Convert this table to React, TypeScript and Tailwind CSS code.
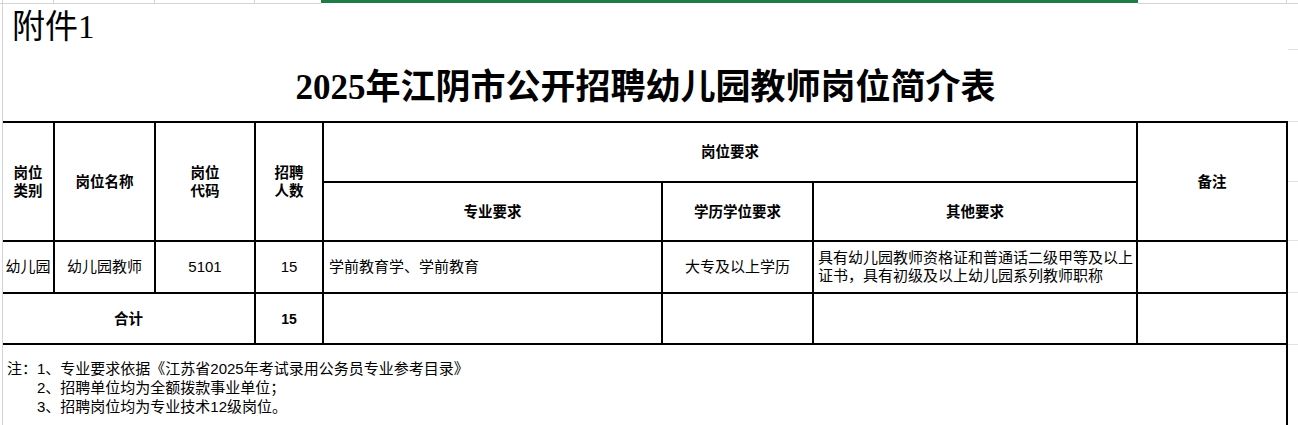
import type { ReactNode } from 'react'

const head = "flex items-center justify-center bg-white text-center text-[14.5px] font-bold leading-[18px]"
const body = "flex items-center bg-white text-[15px] leading-[18px]"

function Cell({ className, children }: { className: string; children?: ReactNode }) {
  return <div className={className}>{children}</div>
}

function TopStrip() {
  return (
    <div className="flex h-[4px]">
      <div className="w-[3px] border-r border-b border-[#d4d4d4]" />
      <div className="w-[51px] border-r border-b border-[#d4d4d4]" />
      <div className="w-[101px] border-r border-b border-[#d4d4d4]" />
      <div className="w-[100px] border-r border-b border-[#d4d4d4]" />
      <div className="w-[66px] border-b border-[#d4d4d4]" />
      <div className="h-[3px] w-[817px] bg-[#1e7d46]" />
      <div className="w-[149px] border-r border-b border-[#d4d4d4]" />
      <div className="flex-1 border-b border-[#d4d4d4]" />
    </div>
  )
}

function RightTicks() {
  return (
    <div className="flex w-[10px] flex-col">
      <div className="h-[46px] border-b border-[#e2e2e2]" />
      <div className="h-[72px] border-b border-[#e2e2e2]" />
      <div className="h-[60px] border-b border-[#e2e2e2]" />
      <div className="h-[59px] border-b border-[#e2e2e2]" />
      <div className="h-[52px] border-b border-[#e2e2e2]" />
      <div className="h-[52px] border-b border-[#e2e2e2]" />
    </div>
  )
}

export default function App() {
  return (
    <div className="h-[425px] w-[1298px] overflow-hidden bg-white text-black font-['Liberation_Sans','Noto_Sans_CJK_SC',sans-serif]">
      <TopStrip />
      <div className="flex">
        <div className="h-[421px] w-[3px] shrink-0 border-r border-[#d4d4d4]" />
        <div className="w-[1285px] shrink-0">
          <div className="flex h-[46px] items-center pl-[9px] text-[33px] leading-none font-['Liberation_Serif','Noto_Sans_CJK_SC',serif]">
            附件1
          </div>
          <div className="flex h-[71px] items-center justify-center pt-[3px] text-[35px] font-bold leading-none font-['Liberation_Serif','Noto_Sans_CJK_SC',serif]">
            2025年江阴市公开招聘幼儿园教师岗位简介表
          </div>

          <div className="grid grid-cols-[50px_99px_98px_66px_337px_149px_322px_148px] grid-rows-[58px_57px_50px_49px_90px] gap-[2px] bg-black pt-[2px] pr-[2px]">
            <Cell className={`${head} row-span-2`}>岗位<br />类别</Cell>
            <Cell className={`${head} row-span-2`}>岗位名称</Cell>
            <Cell className={`${head} row-span-2`}>岗位<br />代码</Cell>
            <Cell className={`${head} row-span-2`}>招聘<br />人数</Cell>
            <Cell className={`${head} col-span-3`}>岗位要求</Cell>
            <Cell className={`${head} row-span-2`}>备注</Cell>
            <Cell className={head}>专业要求</Cell>
            <Cell className={head}>学历学位要求</Cell>
            <Cell className={head}>其他要求</Cell>

            <Cell className={`${body} justify-center`}>幼儿园</Cell>
            <Cell className={`${body} justify-center`}>幼儿园教师</Cell>
            <Cell className={`${body} justify-center text-[14px]`}>5101</Cell>
            <Cell className={`${body} justify-center text-[14px]`}>15</Cell>
            <Cell className={`${body} pl-[5px]`}>学前教育学、学前教育</Cell>
            <Cell className={`${body} justify-center`}>大专及以上学历</Cell>
            <Cell className={`${body} pl-[4px]`}>
              <div>
                具有幼儿园教师资格证和普通话二级甲等及以上
                <br />
                证书，具有初级及以上幼儿园系列教师职称
              </div>
            </Cell>
            <Cell className="bg-white" />

            <Cell className={`${head} col-span-3`}>合计</Cell>
            <Cell className={`${head} text-[14px]`}>15</Cell>
            <Cell className="bg-white" />
            <Cell className="bg-white" />
            <Cell className="bg-white" />
            <Cell className="bg-white" />

            <div className="col-span-8 bg-white pl-[4px] pt-[14px] text-[15px] leading-[19px]">
              <p>注：1、专业要求依据《江苏省2025年考试录用公务员专业参考目录》</p>
              <p className="pl-[30px]">2、招聘单位均为全额拨款事业单位；</p>
              <p className="pl-[30px]">3、招聘岗位均为专业技术12级岗位。</p>
            </div>
          </div>
        </div>
        <RightTicks />
      </div>
    </div>
  )
}
